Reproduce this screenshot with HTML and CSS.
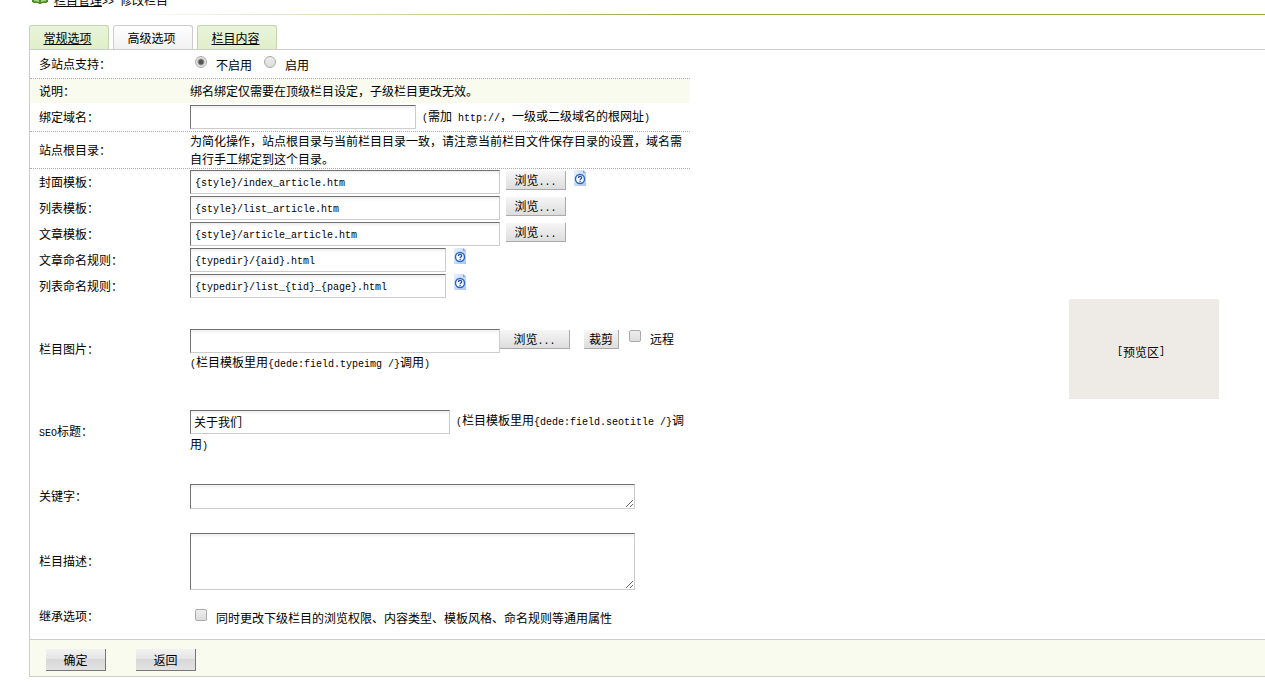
FILE: index.html
```html
<!DOCTYPE html>
<html lang="zh-CN">
<head>
<meta charset="utf-8">
<title>修改栏目</title>
<link rel="stylesheet" href="styles.css">
</head>
<body>
<svg class="defs" width="0" height="0" aria-hidden="true">
  <linearGradient id="page-fill" x1="0" y1="0" x2="1" y2="1">
    <stop offset="0" stop-color="#e9f2fd"/><stop offset="1" stop-color="#a9c6ef"/>
  </linearGradient>
  <symbol id="help" viewBox="0 0 12 16">
    <path d="M0 0h9l3 3v13H0z" fill="url(#page-fill)"/>
    <path d="M9 0l3 3H9z" fill="#7fa6dc"/>
    <circle cx="6" cy="9" r="4.500" fill="#fff" stroke="#2a62c0" stroke-width="1.400"/>
    <path d="M4.400 8c0-2.200 3.300-2.200 3.300-.2 0 1.200-1.600 1.100-1.600 2.200M6.100 10.700v1.200" fill="none" stroke="#1d4da8" stroke-width="1.300"/>
  </symbol>
</svg>
<nav class="crumbs">
  <svg class="book" viewBox="0 0 16 16" aria-hidden="true">
    <path d="M0 3l8 2 8-2v11l-2 1h-4L9 16H7l-1-1H2l-2-1z" fill="#4f8a2a"/>
    <path d="M2 4l5 1.500v8.500L2 13zM14 4L9 5.500v8.500l5-1z" fill="#a5cf74"/>
  </svg>
  <span><a href="#">栏目管理</a><span class="half">&gt;&gt; </span>修改栏目</span>
</nav>
<hr class="rule">
<main class="page">
  <nav class="tabs">
    <a class="tab" href="#">常规选项</a>
    <span class="tab current">高级选项</span>
    <a class="tab" href="#">栏目内容</a>
  </nav>
  <form class="panel">
    <div class="row tall dotted">
      <span class="label">多站点支持：</span>
      <div class="field checks">
        <label><input type="radio" name="multi" checked>不启用</label>
        <label><input type="radio" name="multi">启用</label>
      </div>
    </div>
    <div class="row tint">
      <span class="label">说明：</span>
      <div class="field">绑名绑定仅需要在顶级栏目设定，子级栏目更改无效。</div>
    </div>
    <div class="row tall dotted">
      <label class="label" for="domain">绑定域名：</label>
      <div class="field line">
        <input class="box w-domain" id="domain" type="text">
        <span class="note"><span class="half">(</span>需加<span class="half"> http://</span>，一级或二级域名的根网址<span class="half">)</span></span>
      </div>
    </div>
    <div class="row dotted">
      <span class="label">站点根目录：</span>
      <div class="field">为简化操作，站点根目录与当前栏目目录一致，请注意当前栏目文件保存目录的设置，域名需自行手工绑定到这个目录。</div>
    </div>
    <div class="row">
      <label class="label" for="t1">封面模板：</label>
      <div class="field line">
        <input class="box half w-tpl" id="t1" type="text" value="{style}/index_article.htm">
        <button class="btn" type="button">浏览<span class="half">...</span></button>
        <svg class="help" role="img" aria-label="帮助"><use href="#help"/></svg>
      </div>
    </div>
    <div class="row">
      <label class="label" for="t2">列表模板：</label>
      <div class="field line">
        <input class="box half w-tpl" id="t2" type="text" value="{style}/list_article.htm">
        <button class="btn" type="button">浏览<span class="half">...</span></button>
      </div>
    </div>
    <div class="row">
      <label class="label" for="t3">文章模板：</label>
      <div class="field line">
        <input class="box half w-tpl" id="t3" type="text" value="{style}/article_article.htm">
        <button class="btn" type="button">浏览<span class="half">...</span></button>
      </div>
    </div>
    <div class="row">
      <label class="label" for="r1">文章命名规则：</label>
      <div class="field line">
        <input class="box half w-rule" id="r1" type="text" value="{typedir}/{aid}.html">
        <svg class="help" role="img" aria-label="帮助"><use href="#help"/></svg>
      </div>
    </div>
    <div class="row">
      <label class="label" for="r2">列表命名规则：</label>
      <div class="field line">
        <input class="box half w-rule" id="r2" type="text" value="{typedir}/list_{tid}_{page}.html">
        <svg class="help" role="img" aria-label="帮助"><use href="#help"/></svg>
      </div>
    </div>
    <div class="picture">
      <div class="row">
        <label class="label" for="pic">栏目图片：</label>
        <div class="field upload">
          <div class="picker">
            <input class="box half w-tpl" id="pic" type="text">
            <button class="btn wide" type="button">浏览<span class="half">...</span></button>
            <button class="btn small" type="button">裁剪</button>
            <label class="remote"><input type="checkbox">远程</label>
          </div>
          <span class="half">(</span>栏目模板里用<span class="half">{dede:field.typeimg /}</span>调用<span class="half">)</span>
        </div>
      </div>
      <div class="preview"><span class="half">[</span>预览区<span class="half">]</span></div>
    </div>
    <div class="row block">
      <label class="label" for="seo"><span class="half">SEO</span>标题：</label>
      <div class="field loose"><input class="box w-seo" id="seo" type="text" value="关于我们"><span class="half">(</span>栏目模板里用<span class="half">{dede:field.seotitle /}</span>调用<span class="half">)</span></div>
    </div>
    <div class="row block">
      <label class="label" for="keys">关键字：</label>
      <div class="field"><textarea class="box area" id="keys"></textarea></div>
    </div>
    <div class="row block">
      <label class="label" for="desc">栏目描述：</label>
      <div class="field"><textarea class="box area big" id="desc"></textarea></div>
    </div>
    <div class="row inherit">
      <span class="label">继承选项：</span>
      <div class="field checks">
        <label><input type="checkbox">同时更改下级栏目的浏览权限、内容类型、模板风格、命名规则等通用属性</label>
      </div>
    </div>
    <div class="actions">
      <button class="btn submit" type="submit">确定</button>
      <button class="btn submit" type="button">返回</button>
    </div>
  </form>
</main>
</body>
</html>
```
FILE: styles.css
```css
* { box-sizing: border-box; }
body {
  margin: 0;
  overflow: hidden;
  background: #fff;
  color: #000;
  font: 12px/18px "Noto Sans CJK SC", sans-serif;
}
a { color: inherit; }
.defs { position: absolute; }
.half {
  font-family: "Liberation Mono", "Noto Sans CJK SC", monospace;
  font-size: 10px;
  line-height: 12px;
  white-space: pre;
}
.crumbs {
  display: flex;
  align-items: center;
  gap: 6px;
  height: 18px;
  margin-top: -9px;
  padding-left: 32px;
}
.book { width: 16px; height: 16px; margin-top: -9px; }
.rule {
  height: 1px;
  margin: 5px 0 10px 120px;
  border: 0;
  background: linear-gradient(90deg, #fff, #96a844 50%, #96a844);
}
.page { padding-left: 29px; }
.tabs { display: flex; gap: 4px; }
.tab {
  width: 80px;
  height: 24px;
  padding-right: 3px;
  border: 1px solid #c3d5ae;
  border-bottom: 0;
  border-radius: 3px 3px 0 0;
  background: linear-gradient(#e9f4da, #e0efc9);
  line-height: 23px;
  text-align: center;
}
.tab.current {
  border-color: #ccc;
  background: linear-gradient(#fff, #f1f1f1);
}
.panel { border: 1px solid #ccc; border-right: 0; }
.row {
  display: flex;
  align-items: center;
  max-width: 660px;
  min-height: 26px;
}
.row.tint { min-height: 24px; background: #f9fbee; }
.row.tall { min-height: 29px; }
.row.block { min-height: 65px; }
.row.inherit { min-height: 45px; }
.row.dotted { border-bottom: 1px dotted #aaa; }
.label { flex: 0 0 160px; padding-left: 9px; }
.block .label, .inherit .label { padding-bottom: 2px; }
.field { flex: 1; min-width: 0; }
.line { display: flex; align-items: center; gap: 6px; }
.note { padding-bottom: 3px; }
.box {
  height: 24px;
  padding: 0 4px;
  border: 1px solid #ccc;
  border-top-color: #707070;
  border-left-color: #707070;
  border-radius: 0;
  outline: 0;
  background: linear-gradient(#eee, #fff 4px);
  color: #000;
  font-family: "Liberation Mono", "Noto Sans CJK SC", monospace;
}
.box.half { padding-top: 2px; }
.box:not(.half) { font-size: 12px; }
.w-domain { width: 226px; }
.w-tpl { width: 310px; }
.w-rule { width: 256px; }
.w-seo { width: 260px; margin-right: 6px; padding: 0 3px; vertical-align: -2px; }
.area { display: block; width: 445px; height: 25px; }
.area.big { height: 57px; }
.loose { line-height: 20px; }
.loose, .loose .half { vertical-align: baseline; }
.btn {
  width: 60px;
  height: 19px;
  padding: 0;
  border: solid #aaa;
  border-width: 0 1px 1px 0;
  background: linear-gradient(#f6f6f6, #ddd);
  color: #000;
  font: inherit;
  line-height: 18px;
}
.wide { width: 70px; }
.small { width: 35px; margin: 0 10px 0 14px; }
.submit {
  height: 22px;
  border-color: #777;
  background: linear-gradient(#f2f2f2, #e4e4e4 50%, #d8d8d8 50%, #e2e2e2);
}
.help { width: 12px; height: 16px; margin: 0 2px 8px; }
.line .btn { margin-bottom: 3px; }
.upload { padding-top: 2px; }
.picker { display: flex; align-items: center; height: 24px; }
.picker .btn { margin-bottom: 3px; }
.checks { display: flex; gap: 12px; padding-left: 5px; }
.checks label, .remote { display: flex; align-items: center; gap: 9px; }
.checks label { padding-top: 2px; }
.remote { padding-bottom: 4px; }
input[type="radio"], input[type="checkbox"] {
  appearance: none;
  width: 12px;
  height: 12px;
  margin: 0 0 6px;
  border: 1px solid #aaa;
  border-radius: 2px;
  background: linear-gradient(#eee, #dcdcdc);
}
input[type="radio"] { border-radius: 50%; }
input[type="radio"]:checked {
  background: radial-gradient(circle, #555 2px, #e6e6e6 4px);
}
.picture {
  display: flex;
  align-items: center;
  justify-content: space-between;
  padding-right: 46px;
}
.picture .row { flex: 0 1 660px; }
.preview {
  display: flex;
  align-items: center;
  justify-content: center;
  width: 150px;
  height: 100px;
  padding: 6px 6px 0 0;
  background: #eeebe6;
}
.actions {
  display: flex;
  align-items: center;
  gap: 30px;
  height: 37px;
  padding: 4px 16px 0;
  border-top: 1px solid #ccc;
  background: #f9fbee;
}
```
